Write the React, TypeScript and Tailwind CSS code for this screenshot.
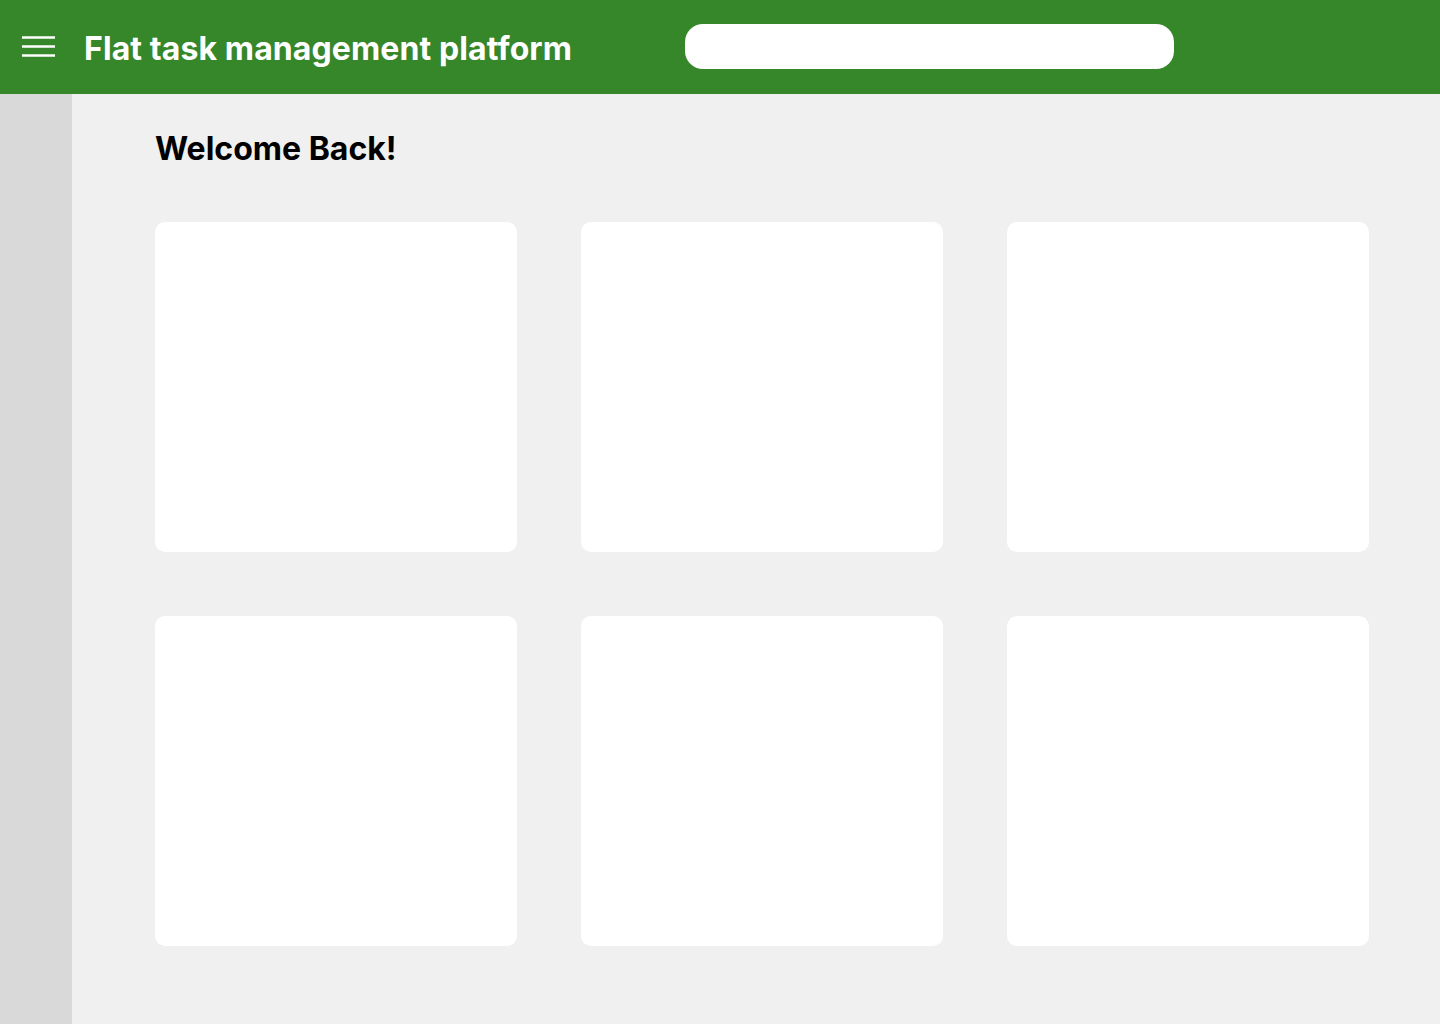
import React from 'react';

const Card: React.FC = () => <div className="h-[330px] w-[362px] rounded-[10px] bg-white" />;

const App: React.FC = () => {
  return (
    <div className="flex h-screen flex-col bg-[#f0f0f0] font-['Inter',sans-serif]">
      <header className="flex h-[94px] shrink-0 items-center bg-[#368729] pl-[22px]">
        <div className="flex w-[663px] shrink-0 items-center gap-[29px]">
          <svg width="33" height="22" viewBox="0 0 33 22" className="shrink-0">
            <path d="M0 1.5h33M0 10.5h33M0 19.5h33" stroke="white" strokeWidth="2.5" />
          </svg>
          <h1 className="mt-[3px] text-[32px] font-bold leading-9 tracking-[0.1px] text-white">
            Flat task management platform
          </h1>
        </div>
        <div className="mb-px h-[45px] w-[489px] rounded-[18px] bg-white" />
      </header>

      <div className="flex flex-1">
        <aside className="w-[72px] shrink-0 bg-[#d9d9d9]" />
        <main className="flex-1 pl-[83px] pt-[37px]">
          <h2 className="text-[32px] font-bold leading-9 text-black">Welcome Back!</h2>
          <div className="mt-[55px] grid w-fit grid-cols-3 gap-x-16 gap-y-[64px]">
            {Array.from({ length: 6 }).map((_, i) => (
              <Card key={i} />
            ))}
          </div>
        </main>
      </div>
    </div>
  );
};

export default App;
